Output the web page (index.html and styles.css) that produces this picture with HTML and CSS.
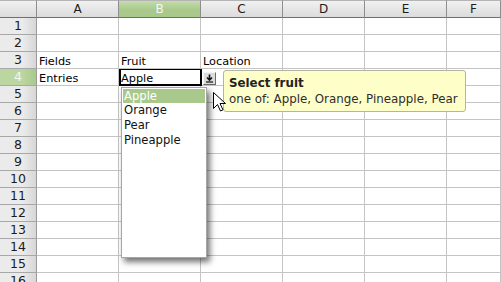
FILE: index.html
```html
<!doctype html>
<html lang="en">
    <head>
        <meta charset="utf-8">
        <title>Validity - Fruit</title>
        <link rel="stylesheet" href="styles.css">
    </head>
    <body>
        <div class="sheet">
            <div class="hoja">
                <div class="corner"></div>
                <div class="col-head">A</div>
                <div class="col-head activa">B</div>
                <div class="col-head">C</div>
                <div class="col-head">D</div>
                <div class="col-head">E</div>
                <div class="col-head">F</div>

                <div class="row-head">1</div>
                <div class="cell"></div><div class="cell"></div><div class="cell"></div><div class="cell"></div><div class="cell"></div><div class="cell"></div>

                <div class="row-head">2</div>
                <div class="cell"></div><div class="cell"></div><div class="cell"></div><div class="cell"></div><div class="cell"></div><div class="cell"></div>

                <div class="row-head">3</div>
                <div class="cell">Fields</div><div class="cell">Fruit</div><div class="cell">Location</div><div class="cell"></div><div class="cell"></div><div class="cell"></div>

                <div class="row-head activa">4</div>
                <div class="cell">Entries</div><div class="cell">Apple</div><div class="cell"></div><div class="cell"></div><div class="cell"></div><div class="cell"></div>

                <div class="row-head">5</div>
                <div class="cell"></div><div class="cell"></div><div class="cell"></div><div class="cell"></div><div class="cell"></div><div class="cell"></div>

                <div class="row-head">6</div>
                <div class="cell"></div><div class="cell"></div><div class="cell"></div><div class="cell"></div><div class="cell"></div><div class="cell"></div>

                <div class="row-head">7</div>
                <div class="cell"></div><div class="cell"></div><div class="cell"></div><div class="cell"></div><div class="cell"></div><div class="cell"></div>

                <div class="row-head">8</div>
                <div class="cell"></div><div class="cell"></div><div class="cell"></div><div class="cell"></div><div class="cell"></div><div class="cell"></div>

                <div class="row-head">9</div>
                <div class="cell"></div><div class="cell"></div><div class="cell"></div><div class="cell"></div><div class="cell"></div><div class="cell"></div>

                <div class="row-head">10</div>
                <div class="cell"></div><div class="cell"></div><div class="cell"></div><div class="cell"></div><div class="cell"></div><div class="cell"></div>

                <div class="row-head">11</div>
                <div class="cell"></div><div class="cell"></div><div class="cell"></div><div class="cell"></div><div class="cell"></div><div class="cell"></div>

                <div class="row-head">12</div>
                <div class="cell"></div><div class="cell"></div><div class="cell"></div><div class="cell"></div><div class="cell"></div><div class="cell"></div>

                <div class="row-head">13</div>
                <div class="cell"></div><div class="cell"></div><div class="cell"></div><div class="cell"></div><div class="cell"></div><div class="cell"></div>

                <div class="row-head">14</div>
                <div class="cell"></div><div class="cell"></div><div class="cell"></div><div class="cell"></div><div class="cell"></div><div class="cell"></div>

                <div class="row-head">15</div>
                <div class="cell"></div><div class="cell"></div><div class="cell"></div><div class="cell"></div><div class="cell"></div><div class="cell"></div>

                <div class="row-head">16</div>
                <div class="cell"></div><div class="cell"></div><div class="cell"></div><div class="cell"></div><div class="cell"></div><div class="cell"></div>
            </div>

            <!-- capas sobre la hoja -->
            <div class="cursor-celda"></div>

            <div class="boton-lista">
                <svg width="9" height="9" viewBox="0 0 9 9">
                    <path d="M4.5 0.5v5M2 3.5l2.5 2.5 2.5-2.5" fill="none" stroke="#111" stroke-width="1.6"/>
                    <path d="M1 8h7" stroke="#111" stroke-width="1.2"/>
                </svg>
            </div>

            <ul class="lista">
                <li class="elegido">Apple</li>
                <li>Orange</li>
                <li>Pear</li>
                <li>Pineapple</li>
            </ul>

            <div class="ayuda">
                <div class="ayuda-titulo">Select fruit</div>
                <div>one of: Apple, Orange, Pineapple, Pear</div>
            </div>

            <svg class="puntero" width="13" height="20" viewBox="0 0 13 20">
                <path d="M0.5 0.5v16l4-4 3 6.5 2.5-1.2-3-6.3h5.5z" fill="#fff" stroke="#000" stroke-width="1" stroke-linejoin="round"/>
            </svg>
        </div>
    </body>
</html>
```

FILE: styles.css
```css
:root {
    --linea: #c4c4c4;
    --linea-cabecera: #8e8e8e;
    --verde: #a9c98c;
    --verde-claro: #c4dcac;
}

body {
    margin: 0;
    padding: 0;
    font-family: "DejaVu Sans", sans-serif;
    background: white;
}

.sheet {
    position: relative;
    width: 501px;
    height: 282px;
    overflow: hidden;
}

.hoja {
    display: grid;
    grid-template-columns: 37px repeat(5, 82px) 1fr;
    grid-template-rows: 18px;
    grid-auto-rows: 17px;
}

.hoja > div {
    box-sizing: border-box;
    border-right: 1px solid var(--linea);
    border-bottom: 1px solid var(--linea);
    overflow: hidden;
    white-space: nowrap;
}

.corner,
.col-head {
    background: linear-gradient(#f1f1f1, #e6e6e6 50%, #dcdcdc);
    border-top: 1px solid #b4b4b4;
}

.hoja > .corner,
.hoja > .col-head {
    border-right-color: var(--linea-cabecera);
    border-bottom-color: #6f6f6f;
}

.col-head {
    text-align: center;
    font-size: 12px;
    line-height: 16px;
    color: #1c1c1c;
}

.col-head.activa {
    background: linear-gradient(var(--verde-claro), var(--verde) 55%);
    color: #f4f8ee;
}

.row-head {
    background: linear-gradient(to right, #ebebeb 62%, #d7d7d7);
    text-align: center;
    font-size: 12.5px;
    line-height: 16px;
    color: #1c1c1c;
}

.hoja > .row-head {
    border-right-color: #9a9a9a;
    border-bottom-color: #a8a8a8;
}

.row-head.activa {
    background: linear-gradient(to right, #bcd6a2 62%, #a9c98c);
    color: #f4f8ee;
}

.cell {
    font-size: 11.3px;
    line-height: 16px;
    padding: 2px 0 0 2px;
    color: #000;
}

.cursor-celda {
    position: absolute;
    left: 119px;
    top: 69px;
    width: 83px;
    height: 17px;
    box-sizing: border-box;
    border: 2px solid #000;
    border-top-width: 1px;
}

.boton-lista {
    position: absolute;
    left: 203px;
    top: 72px;
    width: 13px;
    height: 13px;
    box-sizing: border-box;
    background: #dcdcdc;
    border: 1px solid;
    border-color: #f4f4f4 #6a6a6a #6a6a6a #f4f4f4;
    display: flex;
    align-items: center;
    justify-content: center;
}

.lista {
    position: absolute;
    left: 121px;
    top: 87px;
    width: 86px;
    height: 171px;
    box-sizing: border-box;
    margin: 0;
    padding: 1px;
    list-style: none;
    background: white;
    border: 1px solid #a6a6a6;
    box-shadow: 3px 4px 6px rgba(0, 0, 0, 0.55);
    font-size: 11.6px;
    line-height: 15px;
    color: #111;
}

.lista li {
    padding-left: 1px;
}

.lista .elegido {
    background: var(--verde);
    color: white;
    height: 14px;
    line-height: 15px;
}

.ayuda {
    position: absolute;
    left: 223px;
    top: 70px;
    padding: 4px 7px 4px 5px;
    background: #fefec8;
    border: 1px solid #b4b4a2;
    border-radius: 3px;
    font-size: 11.85px;
    line-height: 16px;
    color: #2e2e2e;
    white-space: nowrap;
}

.ayuda-titulo {
    font-weight: bold;
    color: #222;
}

.puntero {
    position: absolute;
    left: 213px;
    top: 92px;
}
```
